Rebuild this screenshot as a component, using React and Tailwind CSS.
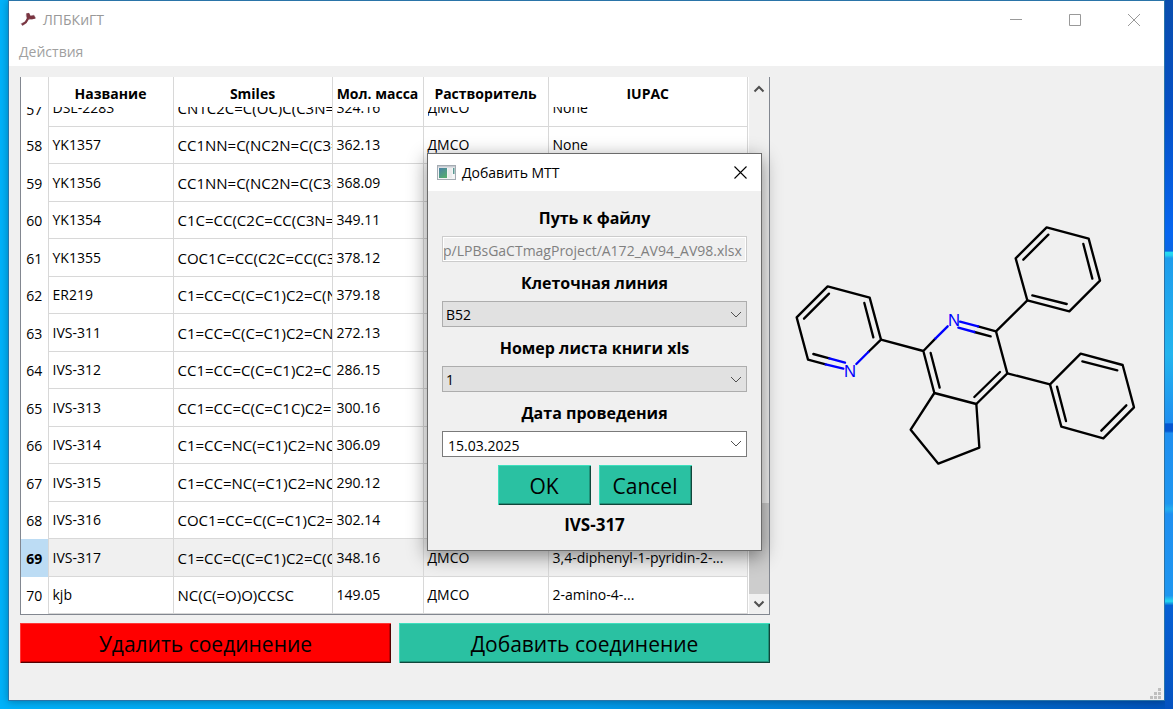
import { useEffect, useRef } from "react";

const rows = [
  [58, "YK1357", "CC1NN=C(NC2N=C(C3=CC=CC=C3)C=C2)", "362.13", "ДМСО", "None"],
  [59, "YK1356", "CC1NN=C(NC2N=C(C3=CC=CC=C3)C=C2)", "368.09", "ДМСО", "None"],
  [60, "YK1354", "C1C=CC(C2C=CC(C3N=CC=C3)=C2)", "349.11", "ДМСО", "None"],
  [61, "YK1355", "COC1C=CC(C2C=CC(C3N=CC=C3)=C2)", "378.12", "ДМСО", "None"],
  [62, "ER219", "C1=CC=C(C=C1)C2=C(NC=C2)", "379.18", "ДМСО", "None"],
  [63, "IVS-311", "C1=CC=C(C=C1)C2=CN=CC=C2", "272.13", "ДМСО", "None"],
  [64, "IVS-312", "CC1=CC=C(C=C1)C2=CN=CC=C2", "286.15", "ДМСО", "None"],
  [65, "IVS-313", "CC1=CC=C(C=C1C)C2=CN=CC=C2", "300.16", "ДМСО", "None"],
  [66, "IVS-314", "C1=CC=NC(=C1)C2=NC=CC=C2", "306.09", "ДМСО", "None"],
  [67, "IVS-315", "C1=CC=NC(=C1)C2=NC=CC=C2", "290.12", "ДМСО", "None"],
  [68, "IVS-316", "COC1=CC=C(C=C1)C2=CN=CC=C2", "302.14", "ДМСО", "None"],
  [69, "IVS-317", "C1=CC=C(C=C1)C2=C(C=CC=C2)", "348.16", "ДМСО", "3,4-diphenyl-1-pyridin-2-..."],
  [70, "kjb", "NC(C(=O)O)CCSC", "149.05", "ДМСО", "2-amino-4-..."],
];

const partial = ["57", "DSL-2283", "CN1C2C=C(OC)C(C3N=CC=C3)", "324.16", "ДМСО", "None"];

const headings = ["Название", "Smiles", "Мол. масса", "Растворитель", "IUPAC"];

const green =
  "bg-[#2ac1a2] shadow-[inset_1px_1px_0_#3edfbe,inset_-1px_-1px_0_#10473b,inset_-2px_-2px_0_#1f9179]";
const red =
  "bg-[#ff0000] shadow-[inset_1px_1px_0_#ff3838,inset_-1px_-1px_0_#550000,inset_-2px_-2px_0_#c00000]";

function Chevron({ className, d = "M1 1l5 5 5-5", width = 1 }) {
  return (
    <svg className={className} width="12" height="8" viewBox="0 0 12 8" fill="none" stroke="#505050" strokeWidth={width}>
      <path d={d} />
    </svg>
  );
}

function CompoundTable() {
  return (
    <div className="flex border border-t-0 border-[#828790] bg-white">
      <div className="min-w-0 flex-1">
        <table className="w-full table-fixed border-collapse text-left text-sm leading-5">
          <colgroup>
            <col className="w-[27px]" />
            <col className="w-[125px]" />
            <col className="w-[159px]" />
            <col className="w-[91px]" />
            <col className="w-[125px]" />
            <col />
          </colgroup>
          <thead>
            <tr className="h-[30px]">
              <td className="border-r border-[#d8d8d8]" />
              {headings.map((h) => (
                <th key={h} scope="col" className="border-r border-[#d8d8d8] p-0 pt-1 text-center font-bold whitespace-nowrap">
                  {h}
                </th>
              ))}
            </tr>
          </thead>
          <tbody>
            <tr>
              {partial.map((text, i) => (
                <td
                  key={i}
                  className={
                    (i === 0
                      ? "border-r border-[#d8d8d8] p-0 text-center"
                      : "overflow-hidden border-r border-b border-[#d8d8d8] p-0 pl-1") + (i === 2 ? " text-[15px]" : "")
                  }
                >
                  <div
                    className={
                      i === 0
                        ? "flex h-[19px] items-end justify-center overflow-hidden pb-1.5"
                        : "flex h-[19px] items-end overflow-hidden pb-2 whitespace-nowrap"
                    }
                  >
                    {text}
                  </div>
                </td>
              ))}
            </tr>
            {rows.map(([id, ...cells], r) => {
              const current = id === 69;
              return (
                <tr key={id} className={(r % 2 ? "h-[38px]" : "h-[37px]") + (current ? " bg-[#f0f0f0]" : "")}>
                  <th
                    scope="row"
                    className={
                      "border-r border-[#d8d8d8] p-0 pt-0.5 text-center " +
                      (current ? "bg-[#bcdcf4] font-bold" : "font-normal")
                    }
                  >
                    {id}
                  </th>
                  {cells.map((text, i) => (
                    <td
                      key={i}
                      className={
                        "overflow-hidden border-r border-b border-[#d8d8d8] p-0 pl-1 whitespace-nowrap" +
                        (i === 1 ? " text-[15px]" : "")
                      }
                    >
                      {text}
                    </td>
                  ))}
                </tr>
              );
            })}
          </tbody>
        </table>
      </div>
      <div className="ml-px flex w-5 flex-col bg-[#f0f0f0]">
        <button type="button" aria-label="Прокрутить вверх" className="flex h-6 items-center justify-center">
          <Chevron d="M1.5 6.5L6 2l4.500 4.500" width={2} />
        </button>
        <div className="flex flex-1 flex-col justify-end">
          <div className="h-[91px] bg-[#cdcdcd]" />
        </div>
        <button type="button" aria-label="Прокрутить вниз" className="flex h-5 items-center justify-center">
          <Chevron d="M1.500 1.500L6 6l4.500-4.500" width={2} />
        </button>
      </div>
    </div>
  );
}

function Molecule() {
  return (
    <svg viewBox="0 0 1152 810" className="w-full" fill="none" strokeWidth="7" strokeLinecap="round" strokeLinejoin="round" role="img" aria-label="IVS-317">
      <g stroke="#000">
        <path d="M800 52L926 86L960 212L868 304L742 271L707 145Z" />
        <path d="M730 149L805 74M910 102L937 206M757 256L860 282" />
        <path d="M265 426L303 389L269 263L143 229L50 322L84 449L137 463" />
        <path d="M72 326L147 251M253 279L280 382M100 432L148 445" />
        <path d="M303 389L430 423M466 386L430 423L463 549L589 582L682 490L648 364L594 349" />
        <path d="M452 429L479 533M583 561L660 486M583 366L632 379" />
        <path d="M648 364L742 271M682 490L810 523" />
        <path d="M463 549L392 659L475 761L598 713L589 582" />
        <path d="M810 523L902 431L1028 465L1062 592L970 685L844 650Z" />
        <path d="M907 454L1012 481M1039 586L964 662M831 530L858 633" />
      </g>
      <path
        stroke="#00f"
        d="M265 426L229 462M137 463L190 476M148 445L195 458M503 349L466 386M540 335L594 349M535 353L583 366"
      />
      <g fill="#00f" fontSize="50" textAnchor="middle" className="font-['Liberation_Sans',sans-serif]">
        <text x="210" y="500">N</text>
        <text x="522" y="349">N</text>
      </g>
    </svg>
  );
}

function Field({ id, label, children }) {
  return (
    <div className="flex flex-col gap-1.5">
      <label htmlFor={id} className="text-center text-base leading-6 font-bold">
        {label}
      </label>
      {children}
    </div>
  );
}

function Picker({ id, value }) {
  return (
    <div className="relative">
      <select
        id={id}
        defaultValue={value}
        className="block h-[26px] w-full appearance-none border border-[#adadad] bg-[#e1e1e1] pt-0.5 pl-[3px] text-sm"
      >
        <option>{value}</option>
      </select>
      <Chevron className="pointer-events-none absolute top-[10px] right-[5px]" />
    </div>
  );
}

function AddDialog() {
  const path = useRef(null);
  useEffect(() => {
    path.current.scrollLeft = path.current.scrollWidth;
  }, []);
  return (
    <div
      role="dialog"
      aria-labelledby="dialog-title"
      className="absolute top-[153px] left-[427px] w-[335px] border border-[#6b6b6b] bg-[#f0f0f0] shadow-[0_5px_18px_rgba(0,0,0,0.45)]"
    >
      <div className="flex h-[37px] items-center bg-white pr-[14px] pl-[9px]">
        <svg width="19" height="16" viewBox="0 0 19 16">
          <defs>
            <linearGradient id="pane" x1="0" y1="0" x2="0.600" y2="1">
              <stop offset="0" stopColor="#4a80a8" />
              <stop offset="1" stopColor="#55ab72" />
            </linearGradient>
          </defs>
          <rect x="0.500" y="0.500" width="18" height="14" fill="#f4f5f6" stroke="#a4abb2" />
          <rect x="1" y="1" width="17" height="1.500" fill="#c5cad0" />
          <rect x="2" y="3" width="8" height="10" fill="url(#pane)" />
          <rect x="11" y="3" width="4" height="10" fill="#ebeced" />
          <rect x="16" y="3" width="1.500" height="6" fill="#5b9a94" />
        </svg>
        <h2 id="dialog-title" className="flex-1 pl-1.5 text-sm">
          Добавить МТТ
        </h2>
        <button type="button" aria-label="Закрыть">
          <svg width="13" height="13" viewBox="0 0 13 13" stroke="#000" strokeWidth="1.100">
            <path d="M0.500 0.500l12 12M12.500 0.500l-12 12" />
          </svg>
        </button>
      </div>
      <form className="flex flex-col gap-2 px-[14px] pt-[15px] pb-[13px]" onSubmit={(e) => e.preventDefault()}>
        <div className="flex flex-col gap-[9px]">
          <Field id="path" label="Путь к файлу">
            <input
              ref={path}
              id="path"
              readOnly
              defaultValue="p/LPBsGaCTmagProject/A172_AV94_AV98.xlsx"
              className="h-[26px] w-full border border-[#cccccc] bg-[#f0f0f0] pt-0.5 pr-1 text-sm text-[#808080] shadow-[inset_0_0_0_1px_#ffffff] outline-none"
            />
          </Field>
          <Field id="line" label="Клеточная линия">
            <Picker id="line" value="B52" />
          </Field>
          <Field id="sheet" label="Номер листа книги xls">
            <Picker id="sheet" value="1" />
          </Field>
          <Field id="date" label="Дата проведения">
            <div className="flex h-[26px] items-center border border-[#7a7a7a] bg-white pr-1">
              <input id="date" defaultValue="15.03.2025" className="min-w-0 flex-1 pt-1 pl-[5px] text-sm outline-none" />
              <button type="button" aria-label="Открыть календарь">
                <Chevron />
              </button>
            </div>
          </Field>
        </div>
        <div className="flex justify-center gap-2">
          <button type="submit" className={"h-10 w-[93px] pt-[3px] text-[21px] " + green}>
            OK
          </button>
          <button type="button" className={"h-10 w-[93px] pt-[3px] text-[21px] " + green}>
            Cancel
          </button>
        </div>
        <p className="text-center text-[17px] leading-6 font-bold">IVS-317</p>
      </form>
    </div>
  );
}

export default function App() {
  return (
    <div className="relative flex min-h-screen bg-linear-to-r from-[#00b2fa] via-[#009ceb] to-[#0053bd] pl-2 font-['Open_Sans','Noto_Sans',sans-serif] text-black">
      <div className="mb-2 flex min-w-0 flex-1 flex-col border border-[#2a74a8] bg-[#f0f0f0] shadow-[0_1px_8px_rgba(0,0,0,0.3)]">
        <header className="bg-white">
          <div className="flex h-[37px] items-center pr-6 pl-[11px]">
            <svg width="16" height="15" viewBox="0 0 16 15">
              <path d="M0.500 11.500L5 9.500l1.800-3L5.800 4 6 1.500 9 0.800l1.500 2.700 3.500-0.800 2 3.300-2 1-2.500 0.500L8.500 8 6 11.500 2.500 14z" fill="#b39aa3" />
              <path d="M6.500 1.500L9 1l1.500 3L14 3.500l1.500 3-3.500 0.800-3-0.500L6.500 11 2.500 13.500 1.500 12l3.500-2.500L7 6z" fill="#7a3440" />
            </svg>
            <h1 className="flex-1 pl-[7px] text-sm text-[#999999]">ЛПБКиГТ</h1>
            <div className="flex items-center gap-[47px] text-[#999999]">
              <button type="button" aria-label="Свернуть">
                <svg width="12" height="12" viewBox="0 0 12 12" stroke="currentColor">
                  <path d="M0 5.500h12" />
                </svg>
              </button>
              <button type="button" aria-label="Развернуть">
                <svg width="12" height="12" viewBox="0 0 12 12" stroke="currentColor" fill="none">
                  <path d="M0.500 0.500h11v11H0.500z" />
                </svg>
              </button>
              <button type="button" aria-label="Закрыть окно">
                <svg width="12" height="12" viewBox="0 0 12 12" stroke="currentColor">
                  <path d="M0 0l12 12M12 0L0 12" />
                </svg>
              </button>
            </div>
          </div>
          <nav className="flex h-7 items-center pl-[10px]">
            <button type="button" className="text-sm text-[#a0a0a0]">
              Действия
            </button>
          </nav>
        </header>
        <main className="grid flex-1 grid-cols-[750fr_394fr] items-start pt-[11px] pl-[11px]">
          <section className="flex min-w-0 flex-col gap-2">
            <CompoundTable />
            <div className="grid grid-cols-2 gap-2">
              <button type="button" className={"h-10 pt-[3px] text-[21px] " + red}>
                Удалить соединение
              </button>
              <button type="button" className={"h-10 pt-[3px] text-[21px] " + green}>
                Добавить соединение
              </button>
            </div>
          </section>
          <aside className="min-w-0 pt-[133px] pl-[10px]">
            <Molecule />
          </aside>
        </main>
        <footer className="flex justify-end pr-[3px]">
          <svg width="11" height="12" viewBox="0 0 11 12" fill="#bfbfbf">
            <path d="M8 0h3v3H8zM4 4h3v3H4zM8 4h3v3H8zM0 8h3v3H0zM4 8h3v3H4zM8 8h3v3H8z" />
          </svg>
        </footer>
      </div>
      <div className="w-2 bg-[linear-gradient(to_bottom,#0a4eae_0%,#0550c4_15%,#0666f0_33%,#0a66e4_35.4%,#25dcf0_35.6%,#25d0f0_36%,#1e9cec_36.4%,#23b4ee_50%,#1f8ff0_59.6%,#0556d0_59.8%,#0556d0_60.8%,#1f8ff0_61.1%,#1e96f0_71%,#23aeee_71.8%,#1f8ff0_72.5%,#1e96f0_84%,#25d8f0_84.8%,#0660d4_85.4%,#0553c0_100%)]" />
      <AddDialog />
    </div>
  );
}
